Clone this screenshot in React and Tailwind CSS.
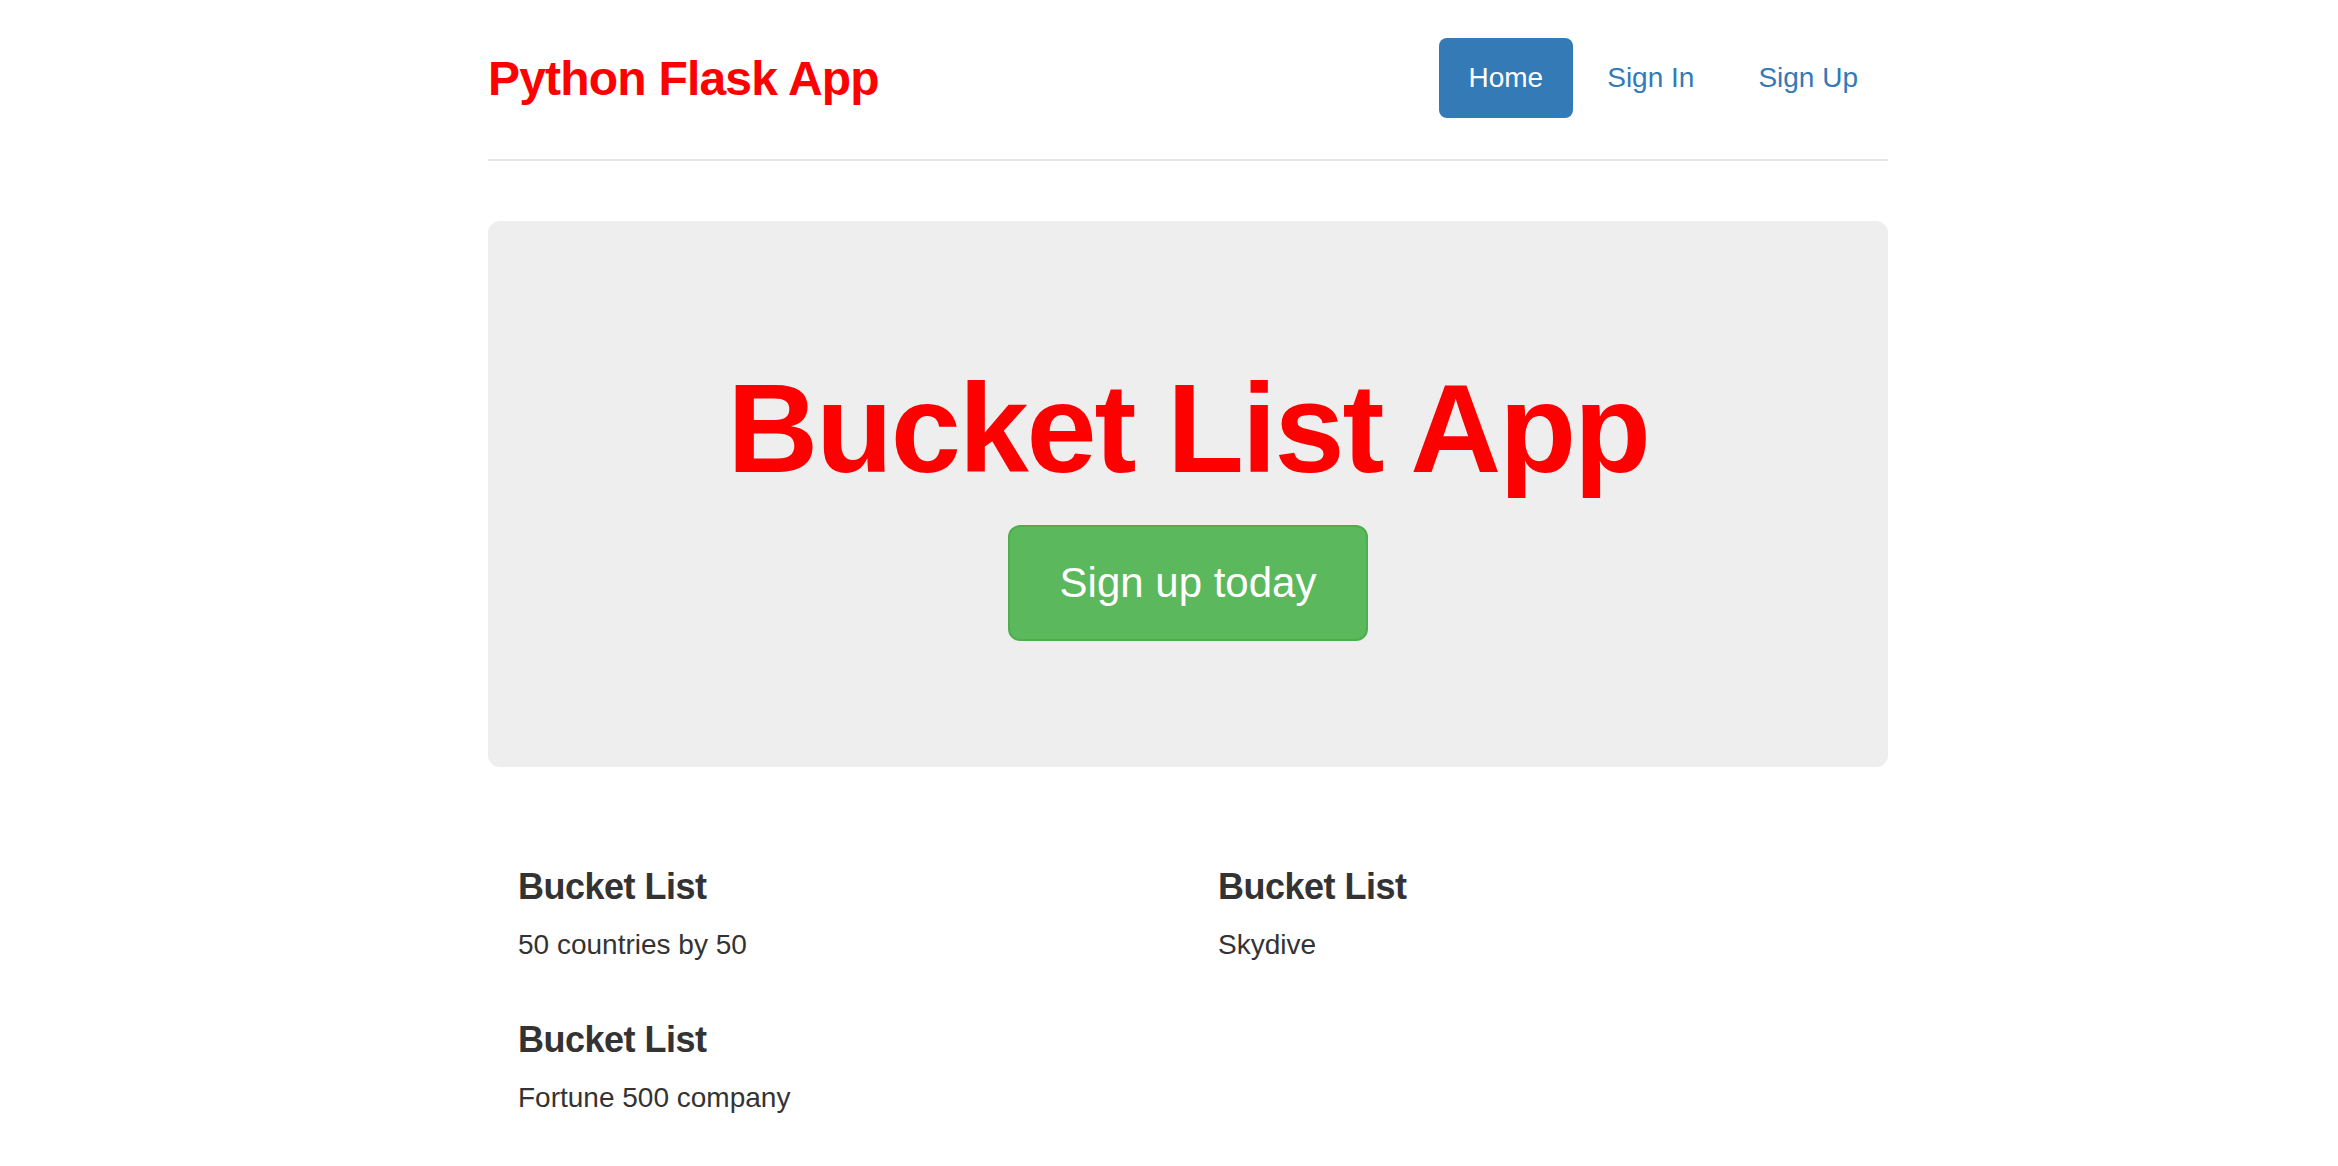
import { useState } from 'react';

const items = [
  { title: 'Bucket List', desc: '50 countries by 50' },
  { title: 'Bucket List', desc: 'Skydive' },
  { title: 'Bucket List', desc: 'Fortune 500 company' },
];

function Nav() {
  const [active] = useState('Home');
  const links = ['Home', 'Sign In', 'Sign Up'];
  return (
    <ul className="flex gap-[4px]">
      {links.map((l) => (
        <li key={l}>
          <a
            href="#"
            className={
              l === active
                ? 'block px-[30px] py-[20px] text-[28px] leading-[40px] rounded-[8px] bg-[#337ab7] text-white'
                : 'block px-[30px] py-[20px] text-[28px] leading-[40px] rounded-[8px] text-[#337ab7]'
            }
          >
            {l}
          </a>
        </li>
      ))}
    </ul>
  );
}

export default function App() {
  // left column gets items 0 and 2, right column item 1 (float order)
  const cols = [[items[0], items[2]], [items[1]]];

  return (
    <div className="min-h-screen bg-white text-[#333] font-['Liberation_Sans',Arial,sans-serif] pt-[38px] pl-[488px]">
      <div className="w-[1400px]">
        {/* header */}
        <div className="flex justify-between items-start pb-[40px] border-b-2 border-[#e5e5e5]">
          <h3 className="text-[48px] leading-[80px] mt-[1px] font-bold tracking-[-0.8px] text-[#ff0000]">
            Python Flask App
          </h3>
          <Nav />
        </div>

        {/* jumbotron */}
        <div className="mt-[60px] bg-[#eeeeee] rounded-[12px] pt-[96px] pb-[96px] flex flex-col items-center">
          <h1 className="mt-[42px] text-[126px] leading-[139px] font-bold tracking-[-2.2px] text-[#ff0000]">
            Bucket List App
          </h1>
          <a
            href="#"
            className="mt-[27px] mb-[30px] w-[360px] text-center py-[28px] text-[42px] leading-[56px] text-white bg-[#5cb85c] border-2 border-[#4cae4c] rounded-[12px]"
          >
            Sign up today
          </a>
        </div>

        {/* marketing */}
        <div className="mt-[80px] grid grid-cols-2">
          {cols.map((col, i) => (
            <div key={i} className="px-[30px]">
              {col.map((it, j) => (
                <div key={j}>
                  <h4
                    className={
                      (j === 0 ? 'mt-[20px]' : 'mt-[55px]') +
                      ' text-[36px] leading-[40px] font-bold tracking-[-0.5px] text-[#333]'
                    }
                  >
                    {it.title}
                  </h4>
                  <p className="mt-[18px] text-[28px] leading-[40px]">{it.desc}</p>
                </div>
              ))}
            </div>
          ))}
        </div>
      </div>
    </div>
  );
}
